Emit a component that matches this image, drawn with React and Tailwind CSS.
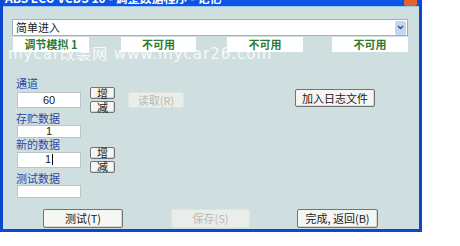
const cjk = { fontFamily: '"Noto Sans CJK SC", "Liberation Sans", sans-serif' };

function Btn({ children, w, h, disabled }) {
  return (
    <div
      style={cjk}
      className={`flex items-center justify-center rounded-[2px] text-[11px] leading-none ${w} ${h} ${
        disabled
          ? "bg-[#e9eeea] text-[#b8bab4] border border-[#dfe4e0]"
          : "bg-[#f6f6f2] text-[#202020] border border-[#6e7478] shadow-[inset_-1px_-1px_0_#d6d6d0]"
      }`}
    >
      {children}
    </div>
  );
}

function Spin() {
  return (
    <div className="ml-[9px] flex flex-col gap-[2px]">
      <Btn w="w-[25px]" h="h-[12px]">增</Btn>
      <Btn w="w-[25px]" h="h-[12px]">减</Btn>
    </div>
  );
}

function Field({ value, h, cursor }) {
  return (
    <div
      className={`ml-[7px] flex w-[64px] items-center justify-center border border-[#b9c6c6] bg-white text-[11px] text-[#202020] ${h}`}
      style={{ fontFamily: '"Liberation Sans", sans-serif' }}
    >
      {value}
      {cursor && <span className="ml-[1px] inline-block h-[11px] w-px bg-black" />}
    </div>
  );
}

function Label({ children, h }) {
  return (
    <div style={cjk} className={`pl-[6px] text-[11px] leading-[12px] text-[#2a4aa6] ${h}`}>
      {children}
    </div>
  );
}

function Box({ children, ml, w }) {
  return (
    <div
      style={cjk}
      className={`flex h-[15px] items-center justify-center bg-white text-[11px] font-bold text-[#2f7a2f] ${ml} ${w}`}
    >
      {children}
    </div>
  );
}

export default function App() {
  return (
    <div className="relative h-[246px] w-[460px] overflow-hidden bg-white">
      <div className="flex h-[232px] w-[422px] flex-col bg-[#0b47d0] px-[3px] pb-[3px]">
        <div className="relative h-[6px] overflow-hidden bg-[#0a54e6]">
          <div
            style={cjk}
            className="absolute left-[2px] top-[-11px] whitespace-nowrap text-[12px] font-bold text-white"
          >
            ABS ECU VCDS 10 - 调整数据程序 - 记忆
          </div>
          <div className="absolute right-[2px] top-0 h-[6px] w-[13px] rounded-b-[2px] bg-[#e0642f]" />
        </div>
        <div className="h-px bg-[#9cc6f0]" />
        <div className="flex flex-1 flex-col bg-[#cfdfe0]">
          <div className="ml-[9px] mt-[12px] flex h-[17px] w-[396px] items-center border border-[#9fb0c0] bg-white">
            <span style={cjk} className="pl-[3px] text-[11px] text-[#202020]">简单进入</span>
            <div className="ml-auto mr-px flex h-[14px] w-[11px] items-center justify-center rounded-[2px] bg-[#c4d6f2]">
              <svg width="7" height="5" viewBox="0 0 7 5">
                <path d="M1 1 L3.5 3.5 L6 1" stroke="#2d4f8a" strokeWidth="1.4" fill="none" />
              </svg>
            </div>
          </div>
          <div className="mt-px flex">
            <Box ml="ml-[10px]" w="w-[76px]">调节模拟 1</Box>
            <Box ml="ml-[32px]" w="w-[75px]">不可用</Box>
            <Box ml="ml-[31px]" w="w-[76px]">不可用</Box>
            <Box ml="ml-[29px]" w="w-[76px]">不可用</Box>
          </div>
          <div className="ml-[7px] mt-[25px] flex">
            <div className="flex flex-col">
              <Label h="h-[11px]">通道</Label>
              <div className="flex h-[24px] items-center">
                <Field value="60" h="h-[16px]" />
                <Spin />
                <div className="ml-[13px]">
                  <Btn w="w-[56px]" h="h-[16px]" disabled>读取(R)</Btn>
                </div>
              </div>
              <Label h="h-[12px]">存贮数据</Label>
              <div className="flex h-[14px] items-center">
                <Field value="1" h="h-[13px]" />
              </div>
              <Label h="h-[9px]">新的数据</Label>
              <div className="flex h-[25px] items-center">
                <Field value="1" h="h-[16px]" cursor />
                <Spin />
              </div>
              <Label h="h-[12px]">测试数据</Label>
              <div className="flex h-[14px] items-center">
                <Field value="" h="h-[13px]" />
              </div>
            </div>
            <div className="ml-[111px] mt-[12px]">
              <Btn w="w-[80px]" h="h-[18px]">加入日志文件</Btn>
            </div>
          </div>
          <div className="ml-[40px] mt-[11px] flex">
            <Btn w="w-[80px]" h="h-[19px]">测试(T)</Btn>
            <div className="ml-[48px]">
              <Btn w="w-[79px]" h="h-[19px]" disabled>保存(S)</Btn>
            </div>
            <div className="ml-[47px]">
              <Btn w="w-[81px]" h="h-[19px]">完成, 返回(B)</Btn>
            </div>
          </div>
        </div>
      </div>
      <div
        style={{ fontFamily: '"DejaVu Sans", "Noto Sans CJK SC", sans-serif' }}
        className="pointer-events-none absolute left-[8px] top-[43px] whitespace-nowrap text-[15px] tracking-[1px] text-white/80"
      >
        mycar改装网 www.mycar26.com
      </div>
    </div>
  );
}
